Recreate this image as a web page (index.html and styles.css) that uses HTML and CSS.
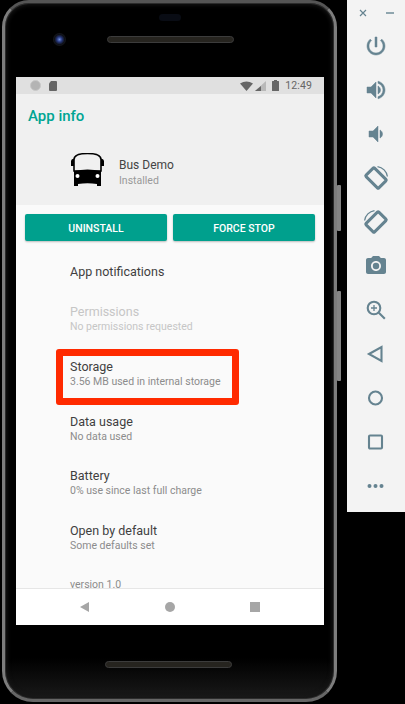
FILE: index.html
```html
<!DOCTYPE html>
<html lang="en">
<head>
<meta charset="utf-8">
<title>App info</title>
<link rel="stylesheet" href="styles.css">
</head>
<body>
<div class="stage">
  <div class="phone">
    <span class="side-btn power"></span>
    <span class="side-btn volume"></span>
    <div class="bezel-top">
      <span class="sensor"></span>
      <div class="bezel-row">
        <span class="camera"></span>
        <span class="speaker"></span>
      </div>
    </div>
    <div class="screen">
      <div class="status">
        <div class="status-left">
          <span class="dot-icon"></span>
          <svg class="sd-icon" viewBox="0 0 8 10"><path d="M2 0h5a1 1 0 0 1 1 1v8a1 1 0 0 1-1 1H1a1 1 0 0 1-1-1V2.500z"/></svg>
        </div>
        <div class="status-right">
          <svg class="wifi-icon" viewBox="0 0 13 10"><path d="M0 2.500Q6.500-1.500 13 2.500L6.500 10z"/></svg>
          <svg class="signal-icon" viewBox="0 0 11 10"><path class="signal-bg" d="M11 0v10H0z"/><path d="M6 5v5H0z"/></svg>
          <svg class="battery-icon" viewBox="0 0 7 11"><path d="M2 0h3v1h1.500a.5.500 0 0 1 .5.500v9a.5.500 0 0 1-.5.500h-6a.5.500 0 0 1-.5-.500v-9a.5.500 0 0 1 .5-.500H2z"/></svg>
          <span class="clock">12:49</span>
        </div>
      </div>
      <div class="app-header">
        <div class="app-title">App info</div>
        <div class="app-row">
          <svg class="bus-icon" viewBox="11 7 34 34">
            <path d="M14 25V13.500C14 10 18 7.500 27.500 7.500S41 10 41 13.500V25z" fill="none" stroke="#000" stroke-width="1.600"/>
            <path d="M11 20v-4.500Q11 13 14 12.500V20zM44 20v-4.500Q44 13 41 12.500V20z"/>
            <path d="M14 25Q27.500 22 41 25V40H37V38Q27.500 36.500 18 38V40H14z"/>
            <circle cx="17.500" cy="30" r="2" fill="#fff"/>
            <circle cx="37.500" cy="30" r="2" fill="#fff"/>
          </svg>
          <div class="app-text">
            <div class="app-name">Bus Demo</div>
            <div class="app-state">Installed</div>
          </div>
        </div>
      </div>
      <div class="actions">
        <button class="action">Uninstall</button>
        <button class="action">Force stop</button>
      </div>
      <div class="list">
        <div class="row row-single"><div class="row-title">App notifications</div></div>
        <div class="row row-disabled">
          <div class="row-title">Permissions</div>
          <div class="row-sub">No permissions requested</div>
        </div>
        <div class="row row-marked">
          <div class="row-title">Storage</div>
          <div class="row-sub">3.56 MB used in internal storage</div>
          <span class="marker"></span>
        </div>
        <div class="row">
          <div class="row-title">Data usage</div>
          <div class="row-sub">No data used</div>
        </div>
        <div class="row">
          <div class="row-title">Battery</div>
          <div class="row-sub">0% use since last full charge</div>
        </div>
        <div class="row">
          <div class="row-title">Open by default</div>
          <div class="row-sub">Some defaults set</div>
        </div>
        <div class="version">version 1.0</div>
      </div>
      <div class="navbar">
        <svg class="nav-icon" viewBox="0 0 10 10"><path d="M0 5l9-5v10z"/></svg>
        <svg class="nav-icon" viewBox="0 0 10 10"><circle cx="5" cy="5" r="5"/></svg>
        <svg class="nav-icon" viewBox="0 0 10 10"><rect width="10" height="10"/></svg>
      </div>
    </div>
    <div class="bezel-bottom"><span class="speaker"></span></div>
  </div>
  <aside class="tools">
    <div class="tools-head">
      <svg class="win-icon" viewBox="0 0 8 8"><path d="M1 1l6 6M7 1L1 7"/></svg>
      <span class="win-min"></span>
    </div>
    <div class="tool"><svg class="bold" viewBox="0 0 24 24"><path d="M13 3h-2v10h2V3zm4.830 2.170l-1.420 1.420C17.990 7.860 19 9.810 19 12c0 3.870-3.130 7-7 7s-7-3.130-7-7c0-2.190 1.010-4.140 2.580-5.420L6.170 5.170C4.230 6.820 3 9.260 3 12c0 4.970 4.030 9 9 9s9-4.030 9-9c0-2.740-1.230-5.180-3.170-6.830z"/></svg></div>
    <div class="tool"><svg class="bold" viewBox="0 0 24 24"><path d="M3 9v6h4l5 5V4L7 9H3zm13.500 3c0-1.770-1.020-3.290-2.500-4.030v8.050c1.480-.73 2.500-2.250 2.500-4.020zM14 3.230v2.060c2.890.86 5 3.540 5 6.710s-2.110 5.850-5 6.710v2.060c4.010-.91 7-4.490 7-8.770s-2.990-7.860-7-8.770z"/></svg></div>
    <div class="tool"><svg class="bold" viewBox="0 0 24 24"><path d="M18.500 12c0-1.770-1.020-3.290-2.500-4.030v8.050c1.480-.73 2.500-2.250 2.500-4.020zM5 9v6h4l5 5V4L9 9H5z"/></svg></div>
    <div class="tool"><svg class="rotate" viewBox="0 0 28 28"><rect x="5" y="8" width="18" height="12" rx="1" transform="rotate(45 14 14)"/><path class="thin" d="M15.500 2.600A11.500 11.500 0 0 1 25.400 12.500"/></svg></div>
    <div class="tool"><svg class="rotate flip" viewBox="0 0 28 28"><rect x="5" y="8" width="18" height="12" rx="1" transform="rotate(45 14 14)"/><path class="thin" d="M15.500 2.600A11.500 11.500 0 0 1 25.400 12.500"/></svg></div>
    <div class="tool"><svg viewBox="0 0 24 24"><path d="M9 2L7.170 4H4c-1.100 0-2 .9-2 2v12c0 1.100.9 2 2 2h16c1.100 0 2-.9 2-2V6c0-1.100-.9-2-2-2h-3.170L15 2H9zm3 15c-2.760 0-5-2.240-5-5s2.240-5 5-5 5 2.240 5 5-2.240 5-5 5z"/><circle cx="12" cy="12" r="3.200"/></svg></div>
    <div class="tool"><svg class="line" viewBox="0 0 24 24"><circle cx="10" cy="10" r="6.300"/><path d="M14.800 14.800l6 6"/><path class="thin" d="M10 7v6M7 10h6"/></svg></div>
    <div class="tool"><svg class="line" viewBox="0 0 24 24"><path d="M5 12l12.500-7v14z"/></svg></div>
    <div class="tool"><svg class="line" viewBox="0 0 24 24"><circle cx="11.500" cy="12" r="6.500"/></svg></div>
    <div class="tool"><svg class="line" viewBox="0 0 24 24"><rect x="5" y="5.500" width="13" height="13" rx="1"/></svg></div>
    <div class="tool"><svg viewBox="0 0 24 24"><circle cx="5.500" cy="12" r="2"/><circle cx="11.500" cy="12" r="2"/><circle cx="17.500" cy="12" r="2"/></svg></div>
  </aside>
</div>
</body>
</html>
```

FILE: styles.css
```css
* { box-sizing: border-box; }
html, body { margin: 0; padding: 0; background: #000; }
body { font-family: Roboto, "Liberation Sans", sans-serif; }

.stage { display: flex; align-items: flex-start; width: 405px; height: 704px; overflow: hidden; background: #000; }

.phone {
  position: relative;
  flex: none;
  display: flex;
  flex-direction: column;
  width: 335px;
  height: 702px;
  margin-left: 2px;
  padding: 0 10px 0 11px;
  background: linear-gradient(180deg, #000 0, #000 655px, #191919 695px);
  border: 3px solid #7d7d7d;
  border-top-color: #555;
  border-bottom-color: #666;
  border-radius: 27px 27px 31px 31px;
  box-shadow: inset 0 0 0 1px #2c2c2c, inset 0 0 4px 2px #161616;
}
.side-btn { position: absolute; right: -7px; width: 4px; background: #858585; border-radius: 1px; }
.side-btn.power { top: 182px; height: 46px; }
.side-btn.volume { top: 288px; height: 90px; }

.bezel-top { position: relative; flex: none; height: 74px; }
.sensor { position: absolute; top: 11px; left: 143px; width: 22px; height: 7px; border-radius: 4px; background: #090c14; }
.bezel-row { display: flex; align-items: center; gap: 41px; padding: 30px 0 0 37px; }
.camera { flex: none; width: 13px; height: 13px; border-radius: 50%; background: radial-gradient(circle, #6f8fe0 0, #26367a 28%, #0e1016 55%, #23262b 100%); }
.speaker { display: block; flex: none; width: 127px; height: 7px; border-radius: 4px; background: #26241f; border: 1px solid #3c3c3c; }

.screen { flex: none; display: flex; flex-direction: column; width: 308px; height: 548px; background: #fafafa; overflow: hidden; }

.status { flex: none; display: flex; justify-content: space-between; align-items: center; height: 17px; padding: 0 12px 0 14px; background: #e0e0e0; }
.status-left, .status-right { display: flex; align-items: center; }
.dot-icon { width: 11px; height: 11px; border-radius: 50%; background: #b4b4b4; border: 1px solid #c8c8c8; margin-right: 8px; }
.sd-icon { width: 8px; height: 10px; fill: #666; }
.wifi-icon { width: 13px; height: 10px; fill: #666; }
.signal-icon { width: 11px; height: 10px; margin-left: 2px; fill: #666; }
.signal-bg { fill: #b9b9b9; }
.battery-icon { width: 7px; height: 11px; margin-left: 6px; fill: #666; }
.clock { margin-left: 6px; font-size: 10.500px; line-height: 17px; color: #666; letter-spacing: .1px; }

.app-header { flex: none; height: 111px; background: #f0f0f0; }
.app-title { display: flex; align-items: center; height: 44px; padding-left: 12px; font-size: 15px; font-weight: 500; color: #00a593; }
.app-row { display: flex; align-items: center; gap: 14px; padding: 14px 0 0 55px; }
.bus-icon { flex: none; width: 34px; height: 34px; fill: #000; }
.app-text { margin-top: 6px; }
.app-name { font-size: 12px; line-height: 15px; color: #444; }
.app-state { font-size: 10.500px; line-height: 15px; color: #999; }

.actions { flex: none; display: flex; gap: 6px; padding: 9px 9px 0; }
.action {
  flex: 1;
  height: 27px;
  padding: 1px 0 0;
  border: 0;
  border-radius: 2px;
  background: #00a08d;
  box-shadow: 0 1px 2px rgba(0,0,0,.25);
  color: #fff;
  font: 500 10.500px Roboto, sans-serif;
  text-transform: uppercase;
}

.list { flex: 1; min-height: 0; overflow: hidden; padding: 9px 0 0 54px; }
.row { position: relative; display: flex; flex-direction: column; justify-content: center; height: 54.700px; }
.row-single { height: 42px; }
.row-title { font-size: 12.500px; line-height: 15px; color: #3f3f3f; }
.row-sub { font-size: 10.500px; line-height: 15px; color: #8c8c8c; }
.row-disabled .row-title, .row-disabled .row-sub { color: #c6c6c6; }
.marker { position: absolute; top: 2px; left: -14px; width: 183px; height: 56px; border: 7px solid #ff2a00; border-radius: 3px; }
.version { height: 40px; line-height: 40px; font-size: 10.500px; color: #8c8c8c; }

.navbar { flex: none; display: flex; justify-content: space-between; align-items: center; height: 37px; padding: 0 64px; background: #fff; border-top: 1px solid #e6e6e6; }
.nav-icon { width: 10px; height: 10px; fill: #a6a6a6; }

.bezel-bottom { flex: 1; display: flex; padding: 36px 0 0 89px; }

.tools { flex: none; width: 58px; height: 512px; margin-left: 10px; background: #f3f3f3; color: #658390; }
.tools-head { display: flex; justify-content: space-between; align-items: center; height: 24px; padding: 2px 11px 0 12px; }
.win-icon { width: 8px; height: 8px; fill: none; stroke: currentColor; stroke-width: 1.200; }
.win-min { width: 8px; height: 1.500px; background: #8fa5ae; }
.tool { display: flex; justify-content: center; align-items: center; height: 44px; }
.tool svg { width: 24px; height: 24px; fill: currentColor; }
.tool .bold { stroke: currentColor; stroke-width: .5; }
.tool .rotate { width: 28px; height: 28px; fill: none; stroke: currentColor; stroke-width: 3; }
.tool .flip { transform: scaleX(-1); }
.tool .thin { stroke-width: 1.300; fill: none; }
.tool .line { fill: none; stroke: currentColor; stroke-width: 2.100; }
```
